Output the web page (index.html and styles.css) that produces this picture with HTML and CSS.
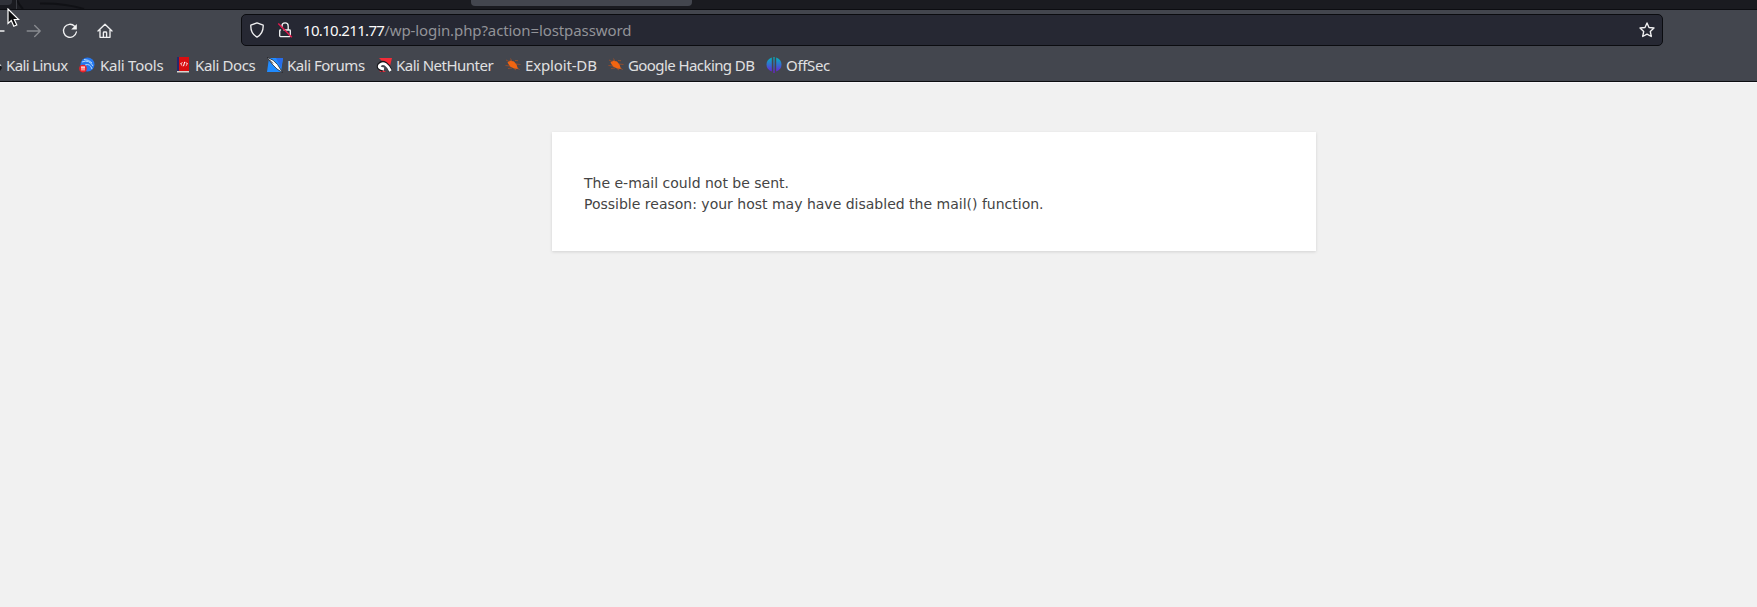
FILE: index.html
```html
<!DOCTYPE html>
<html lang="en">
<head>
<meta charset="utf-8">
<title>WordPress › Error</title>
<link rel="stylesheet" href="styles.css">
</head>
<body>
<header class="browser">
  <div class="tabstrip">
    <svg class="dragon" width="150" height="9" viewBox="0 0 150 9"><path d="M17 0q2 5 6 9M40 3.500Q65 3 84 9" fill="none" stroke="#101115" stroke-width="2"/></svg>
    <span class="tab-edge"></span>
    <span class="tab"></span>
  </div>
  <div class="toolbar">
    <nav class="nav">
      <svg width="16" height="16" viewBox="0 0 16 16"><path class="line" d="M14 8H1M7 2L1 8l6 6"/></svg>
      <svg class="dim" width="16" height="16" viewBox="0 0 16 16"><path class="line" d="M1.200 8h13M8.700 2.500L14.200 8l-5.500 5.500"/></svg>
      <svg width="16" height="16" viewBox="0 0 16 16"><path class="line" d="M12.600 3.200A6.500 6.500 0 1 0 14.400 9"/><path d="M14.800 1v5.500H9.200z" fill="#f5f5f5"/></svg>
      <svg class="home" width="16" height="16" viewBox="0 0 16 16"><path class="line" d="M1 8l7-6.700L15 8M3 6.800v7.500h10V6.800M6.400 14V9.800q0-.8.800-.8h1.600q.8 0 .8.800V14"/></svg>
    </nav>
    <div class="urlbar">
      <svg width="16" height="16" viewBox="0 0 16 16"><path class="line" d="M8 .9L14.200 3.200C14.400 8.500 12.800 12.300 8 15.100 3.200 12.300 1.600 8.500 1.800 3.200z"/></svg>
      <svg class="lock" width="16" height="16" viewBox="0 0 16 16"><path class="line" d="M5 5V4a3 3 0 0 1 6.200 0v4M7 8h5.500q.8 0 .8.800v5q0 .8-.8.800h-9q-.8 0-.8-.8v-5q0-.8.800-.8"/><path d="M1.300 1.500l13.500 13.700" stroke="#e2194d" stroke-width="1.500"/></svg>
      <span class="url"><span class="host">10.10.211.77</span>/wp-login.php?action=lostpassword</span>
      <svg class="star" width="16" height="16" viewBox="0 0 16 16"><path class="line" d="M8 .9l2 4.600 5 .5-3.700 3.500 1 5L8 12.100l-4.300 2.400 1-5L1 6l5-.5z"/></svg>
    </div>
  </div>
  <nav class="bookmarks">
    <a class="bm bm-linux"><svg width="16" height="16" viewBox="0 0 16 16"><path d="M10 4l4 3 2 4-2 3-1-4-4-3z" fill="#17181c"/><path d="M13 6l2 3" stroke="#ddd"/></svg>Kali Linux</a>
    <a class="bm bm-tools"><svg width="16" height="16" viewBox="0 0 16 16"><circle cx="8.500" cy="7.500" r="7" fill="#2678f0"/><path d="M3 5q7-3 11 4M6 8q5-2 7 4M5 2.500q5 0 8 3.500" fill="none" stroke="#b5dcff"/><circle cx="4" cy="11.600" r="3.800" fill="#ed2028"/><path d="M2 10h4M3 10v3.500M5 10v3.500" stroke="#fff"/></svg>Kali Tools</a>
    <a class="bm bm-docs"><svg width="16" height="16" viewBox="0 0 16 16"><path d="M2 0h12v14H2z" fill="#d90d10"/><path d="M2 0h2v14H2z" fill="#26286c"/><path d="M2 14h12v1.500H2z" fill="#d8d5cf"/><path d="M7.300 5.300L5.600 7l1.700 1.700M10.800 5.300L12.500 7l-1.700 1.700M9.700 4.800L8.500 9.200" fill="none" stroke="#fff"/></svg>Kali Docs</a>
    <a class="bm bm-forums"><svg width="16" height="16" viewBox="0 0 16 16"><path d="M2 1h14l-2 14H0z" fill="#208bff"/><path d="M9 1h7l-2 10z" fill="#286bea"/><path d="M0 .3l6 2.900 4.500 4.300L15.500 15.500l-5.500-3.500-5-5z" fill="#fff" stroke="#17191d" stroke-width=".7"/><path d="M2 2.500l4 4" stroke="#29292c"/></svg>Kali Forums</a>
    <a class="bm bm-hunter"><svg width="16" height="16" viewBox="0 0 16 16"><path d="M3 1h13l-2.500 10L8 6z" fill="#f32c38"/><path d="M2 10l8 5H4z" fill="#e82737"/><path d="M7 13Q1 11 3.500 7.500C7 3.500 12 7 14.500 14" fill="none" stroke="#17181c" stroke-width="4"/><path d="M8 12Q1.500 11 4 8C7.500 4.500 11.500 8 14.500 14" fill="none" stroke="#fff" stroke-width="2.800"/></svg>Kali NetHunter</a>
    <a class="bm bm-exploit"><svg width="16" height="16" viewBox="0 0 16 16"><path class="bug" d="M2.500 5.500l2.500-2 4 1 2.500 3 1.500 4.500-4-.5-4-2z"/><path class="legs" d="M1 3l4 2M5.500 1.500l1.500 3M10 3.500l3 .2M11 7l4.500.5M12 10l2.500 3M7 11l-4 .5M5 9L.5 8.500M9 11.500l2 1.500"/></svg>Exploit-DB</a>
    <a class="bm bm-google"><svg width="16" height="16" viewBox="0 0 16 16"><path class="bug" d="M2.500 5.500l2.500-2 4 1 2.500 3 1.500 4.500-4-.5-4-2z"/><path class="legs" d="M1 3l4 2M5.500 1.500l1.500 3M10 3.500l3 .2M11 7l4.500.5M12 10l2.500 3M7 11l-4 .5M5 9L.5 8.500M9 11.500l2 1.500"/></svg>Google Hacking DB</a>
    <a class="bm bm-offsec"><svg width="16" height="16" viewBox="0 0 16 16"><defs><linearGradient id="os" gradientUnits="userSpaceOnUse" x1="8" y1="0" x2="8" y2="16"><stop stop-color="#00b8bd"/><stop offset=".5" stop-color="#356bd0"/><stop offset="1" stop-color="#7414dc"/></linearGradient></defs><path d="M5.800.5v14Q.5 12.500.5 7.500T5.800.5zM7.400 0h1.200v16H7.400zM10.200.5q5.300 2 5.300 7t-5.300 7z" fill="url(#os)"/></svg>OffSec</a>
  </nav>
  <svg class="cursor" width="13" height="20" viewBox="0 0 13 20"><path d="M1 1v14.500l3.300-3 2.500 5.800 3-1.300-2.500-5.500h4.400z" fill="#0c0d0f" stroke="#fff" stroke-width="1.200"/></svg>
</header>
<main class="page">
  <section class="error-card">
    <p>The e-mail could not be sent.<br>Possible reason: your host may have disabled the mail() function.</p>
  </section>
</main>
</body>
</html>
```
FILE: styles.css
```css
* { box-sizing: border-box; }
body { margin: 0; height: 607px; overflow: hidden; background: #f1f1f1; font-family: "DejaVu Sans", sans-serif; }
.browser { position: relative; height: 82px; overflow: hidden; background: #43464e; border-bottom: 1px solid #0c0d11; font-family: "Noto Sans", sans-serif; font-size: 15px; color: #e0e0e1; }
svg { display: block; flex: none; }
.line { fill: none; stroke: #f0f0f1; stroke-width: 1.35; stroke-linecap: round; stroke-linejoin: round; }
.tabstrip { position: relative; height: 10px; background: #1a1b20; border-bottom: 1px solid #0c0d11; }
.tab { position: absolute; left: 471px; top: 0; width: 221px; height: 6px; background: #43464e; border-radius: 0 0 4px 4px; }
.tab-edge { position: absolute; left: 0; top: 0; width: 17px; height: 9px; border-right: 1px solid #3b3d43; }
.tab-edge::before { content: ""; display: block; width: 12px; height: 5px; background: #303239; border-radius: 0 0 4px 0; }
.toolbar { display: flex; height: 40px; padding-top: 4px; }
.nav { display: flex; align-items: center; gap: 20px; width: 241px; height: 33px; margin-left: -10px; margin-right: 10px; }
.home { margin-left: -1px; }
.dim { opacity: .4; }
.urlbar { display: flex; align-items: center; width: 1422px; height: 32px; padding: 0 7px; background: #262833; border: 1px solid #0b0c10; border-radius: 5px; }
.lock { margin-left: 12px; }
.url { margin-left: 10px; line-height: 30px; color: #929398; letter-spacing: -.1px; white-space: nowrap; }
.host { color: #fafafa; letter-spacing: -.67px; }
.star { margin-left: auto; }
.bookmarks { display: flex; height: 29px; align-items: center; margin-left: -14px; }
.bookmarks svg { margin-top: 1px; }
.bm { display: flex; align-items: center; gap: 4px; white-space: nowrap; flex: none; }
.bm-linux { width: 93px; letter-spacing: -.6px; }
.bm-tools { width: 96px; gap: 5px; letter-spacing: -.25px; }
.bm-docs { width: 92px; letter-spacing: -.38px; }
.bm-forums { width: 109px; letter-spacing: -.48px; }
.bm-hunter { width: 129px; letter-spacing: -.52px; }
.bm-exploit { width: 103px; letter-spacing: -.15px; }
.bm-google { width: 158px; letter-spacing: -.58px; }
.bm-offsec { letter-spacing: -.33px; }
.bug { fill: #f26511; }
.legs { fill: none; stroke: #b5501f; stroke-width: .7; }
.cursor { position: absolute; left: 7px; top: 8px; }
.page { border-top: 1px solid #f8f7fa; padding-top: 49px; }
.error-card { width: 764px; height: 119px; margin-left: 552px; padding: 41px 32px 37px; background: #fff; box-shadow: 0 1px 3px rgba(0,0,0,.13); }
.error-card p { margin: 0; color: #444; font-size: 14px; line-height: 21px; }
```
